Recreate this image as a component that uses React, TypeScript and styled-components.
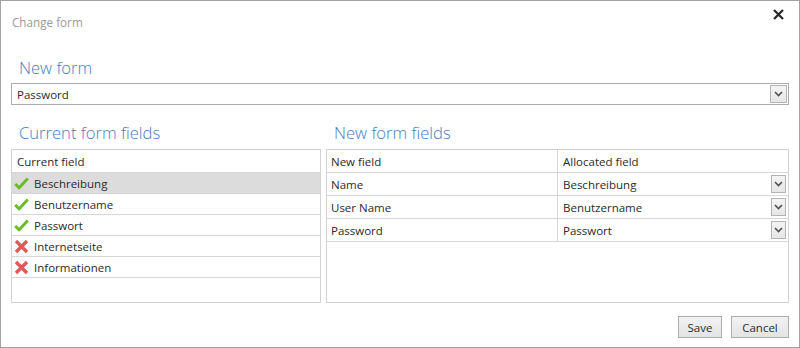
import React from "react";
import styled, { createGlobalStyle } from "styled-components";

const Global = createGlobalStyle`
  html, body { margin: 0; padding: 0; background: #fff; }
  body { font-family: "Open Sans", "Noto Sans", sans-serif; }
  * { box-sizing: border-box; }
`;

const Dialog = styled.div`
  width: 800px;
  height: 348px;
  border: 1px solid #a3a3a3;
  background: #fff;
  padding: 0 10px 9px 10px;
  display: flex;
  flex-direction: column;
  color: #2b2b2b;
  font-size: 11.5px;
`;

const TitleBar = styled.div`
  height: 55px;
  flex: none;
  display: flex;
  justify-content: space-between;
  align-items: flex-start;
`;

const Title = styled.div`
  padding: 12px 0 0 1px;
  line-height: 18px;
  font-size: 11.7px;
  color: #9a9a9a;
`;

const Close = styled.button`
  margin: 7px 4px 0 0;
  width: 13px;
  height: 13px;
  padding: 0;
  border: 0;
  background: none;
  display: flex;
`;

const Heading = styled.h2`
  margin: 0;
  padding-left: 8px;
  height: 24px;
  line-height: 24px;
  font-size: 16.6px;
  font-weight: 300;
  color: #3f80c4;
  white-space: nowrap;
`;

const Combo = styled.div`
  margin-top: 3px;
  height: 22px;
  flex: none;
  border: 1px solid #ababab;
  display: flex;
  align-items: center;
  justify-content: space-between;
  padding: 0 1px 0 5px;
`;

const DropBtn = styled.div<{ $w: number; $h: number }>`
  width: ${(p) => p.$w}px;
  height: ${(p) => p.$h}px;
  border: 1px solid #b4b4b4;
  background: linear-gradient(#f4f4f4, #e6e6e6);
  display: flex;
  align-items: center;
  justify-content: center;
  flex: none;
`;

const Columns = styled.div`
  flex: 1;
  display: grid;
  grid-template-columns: 310px 1fr;
  column-gap: 5px;
  margin-top: 16px;
  min-height: 0;
`;

const Column = styled.div`
  display: flex;
  flex-direction: column;
  min-height: 0;
`;

const Box = styled.div`
  margin-top: 4px;
  flex: 1;
  border: 1px solid #d2d2d2;
  display: flex;
  flex-direction: column;
`;

const ListRow = styled.div<{ $header?: boolean; $selected?: boolean }>`
  height: ${(p) => (p.$header ? 23 : 21)}px;
  flex: none;
  border-bottom: 1px solid #d7d7d7;
  background: ${(p) => (p.$selected ? "#dcdcdc" : "transparent")};
  display: flex;
  align-items: center;
  gap: 5px;
  padding-left: ${(p) => (p.$header ? 5 : 2)}px;
  white-space: nowrap;
`;

const Icon = styled.span`
  width: 15px;
  height: 15px;
  display: flex;
  align-items: center;
  justify-content: center;
`;

const GridRow = styled.div`
  height: 23px;
  flex: none;
  display: grid;
  grid-template-columns: 230px 1fr;
  border-bottom: 1px solid #d7d7d7;
`;

const Cell = styled.div<{ $right?: boolean }>`
  display: flex;
  align-items: center;
  justify-content: space-between;
  padding: 0 2px 0 ${(p) => (p.$right ? 5 : 4)}px;
  border-left: ${(p) => (p.$right ? "1px solid #d7d7d7" : "0")};
  white-space: nowrap;
`;

const Footer = styled.div`
  flex: none;
  margin-top: 13px;
  display: flex;
  justify-content: flex-end;
  gap: 9px;
`;

const Button = styled.button<{ $w: number }>`
  width: ${(p) => p.$w}px;
  height: 22px;
  border: 1px solid #adadad;
  background: linear-gradient(#f2f2f2, #e4e4e4);
  font-family: "Open Sans", "Noto Sans", sans-serif;
  font-size: 11.5px;
  color: #2b2b2b;
  padding: 0;
`;

const Chevron = () => (
  <svg width="9" height="6" viewBox="0 0 9 6">
    <path d="M1 1 L4.5 4.5 L8 1" fill="none" stroke="#505050" strokeWidth="1.6" />
  </svg>
);

const Check = () => (
  <svg width="15" height="13" viewBox="0 0 15 13">
    <path d="M1.2 7 L5.2 10.8 L13.8 1.6" fill="none" stroke="#6cbd25" strokeWidth="3" strokeLinejoin="round" />
  </svg>
);

const Cross = () => (
  <svg width="15" height="15" viewBox="0 0 15 15">
    <path d="M2 2 L13 13 M13 2 L2 13" fill="none" stroke="#e05858" strokeWidth="3.4" />
  </svg>
);

const currentFields = [
  { name: "Beschreibung", ok: true, selected: true },
  { name: "Benutzername", ok: true },
  { name: "Passwort", ok: true },
  { name: "Internetseite", ok: false },
  { name: "Informationen", ok: false },
];

const mappings = [
  ["Name", "Beschreibung"],
  ["User Name", "Benutzername"],
  ["Password", "Passwort"],
];

export default function App() {
  return (
    <>
      <Global />
      <Dialog>
        <TitleBar>
          <Title>Change form</Title>
          <Close aria-label="Close">
            <svg width="13" height="13" viewBox="0 0 13 13">
              <path d="M2 2 L11 11 M11 2 L2 11" stroke="#2a2a2a" strokeWidth="2.3" fill="none" />
            </svg>
          </Close>
        </TitleBar>
        <Heading>New form</Heading>
        <Combo>
          <span>Password</span>
          <DropBtn $w={17} $h={18}>
            <Chevron />
          </DropBtn>
        </Combo>
        <Columns>
          <Column>
            <Heading>Current form fields</Heading>
            <Box>
              <ListRow $header>Current field</ListRow>
              {currentFields.map((f) => (
                <ListRow key={f.name} $selected={f.selected}>
                  <Icon>{f.ok ? <Check /> : <Cross />}</Icon>
                  {f.name}
                </ListRow>
              ))}
            </Box>
          </Column>
          <Column>
            <Heading>New form fields</Heading>
            <Box>
              <GridRow>
                <Cell>New field</Cell>
                <Cell $right>Allocated field</Cell>
              </GridRow>
              {mappings.map(([a, b]) => (
                <GridRow key={a}>
                  <Cell>{a}</Cell>
                  <Cell $right>
                    {b}
                    <DropBtn $w={15} $h={18}>
                      <Chevron />
                    </DropBtn>
                  </Cell>
                </GridRow>
              ))}
            </Box>
          </Column>
        </Columns>
        <Footer>
          <Button $w={44}>Save</Button>
          <Button $w={58}>Cancel</Button>
        </Footer>
      </Dialog>
    </>
  );
}
